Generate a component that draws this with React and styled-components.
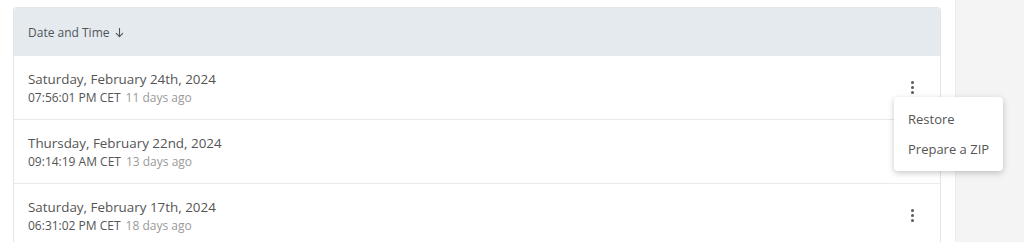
import React from 'react'
import styled, { createGlobalStyle } from 'styled-components'

const GlobalStyle = createGlobalStyle`
  html, body {
    margin: 0;
    padding: 0;
    background: #ffffff;
  }
  body {
    font-family: "Open Sans", "Noto Sans", sans-serif;
    color: #555555;
  }
`

const Page = styled.div`
  display: flex;
  height: 242px;
  overflow: hidden;
`

const Main = styled.div`
  width: 928px;
  padding: 7px 14px 0 13px;
  flex-shrink: 0;
`

const Side = styled.div`
  flex: 1;
  background: #f4f4f4;
  border-left: 1px solid #ececec;
`

const Card = styled.div`
  border: 1px solid #e2e6e9;
  border-bottom: none;
  border-radius: 4px 4px 0 0;
  background: #ffffff;
`

const Header = styled.div`
  height: 48px;
  display: flex;
  align-items: center;
  padding: 0 14px;
  background: #e4eaee;
  border-radius: 3px 3px 0 0;
  font-size: 12px;
  color: #505458;
  gap: 5px;
`

const Row = styled.div`
  position: relative;
  height: 63px;
  display: flex;
  align-items: center;
  justify-content: space-between;
  padding: 0 14px;
  border-bottom: 1px solid #e8eaec;
`

const Info = styled.div`
  display: flex;
  flex-direction: column;
  gap: 1px;
`

const Title = styled.div`
  font-size: 13.4px;
  color: #555555;
  line-height: 18px;
`

const Sub = styled.div`
  font-size: 12px;
  line-height: 17px;
  color: #555555;
`

const Ago = styled.span`
  color: #9a9a9a;
  margin-left: 5px;
`

const Kebab = styled.button`
  border: none;
  background: none;
  padding: 0;
  width: 16px;
  height: 20px;
  margin-right: 6px;
  display: flex;
  flex-direction: column;
  align-items: center;
  justify-content: center;
  gap: 2px;
  cursor: pointer;
`

const Dot = styled.span`
  width: 3px;
  height: 3px;
  border-radius: 50%;
  background: #5a5a5a;
`

const Menu = styled.div`
  position: absolute;
  top: 41px;
  left: 880px;
  width: 109px;
  padding: 7px 0;
  background: #ffffff;
  border-radius: 4px;
  box-shadow: 0 2px 6px rgba(0, 0, 0, 0.22);
  z-index: 2;
`

const MenuItem = styled.div`
  font-size: 13px;
  color: #555555;
  padding: 0 14px;
  line-height: 30px;
  white-space: nowrap;
`

const rows = [
  { date: 'Saturday, February 24th, 2024', time: '07:56:01 PM CET', ago: '11 days ago', open: true },
  { date: 'Thursday, February 22nd, 2024', time: '09:14:19 AM CET', ago: '13 days ago' },
  { date: 'Saturday, February 17th, 2024', time: '06:31:02 PM CET', ago: '18 days ago', kebab: true },
]

const ArrowDown = () => (
  <svg width="11" height="11" viewBox="0 0 12 12" fill="none" stroke="#505458" strokeWidth="1.2" strokeLinecap="round" strokeLinejoin="round">
    <path d="M6 1.5v9M2.5 7L6 10.5 9.5 7" />
  </svg>
)

const App = () => (
  <Page>
    <GlobalStyle />
    <Main>
      <Card>
        <Header>
          Date and Time <ArrowDown />
        </Header>
        {rows.map(r => (
          <Row key={r.date}>
            <Info>
              <Title>{r.date}</Title>
              <Sub>
                {r.time}
                <Ago>{r.ago}</Ago>
              </Sub>
            </Info>
            {(r.open || r.kebab) && (
              <Kebab aria-label="More">
                <Dot />
                <Dot />
                <Dot />
              </Kebab>
            )}
            {r.open && (
              <Menu>
                <MenuItem>Restore</MenuItem>
                <MenuItem>Prepare a ZIP</MenuItem>
              </Menu>
            )}
          </Row>
        ))}
      </Card>
    </Main>
    <Side />
  </Page>
)

export default App
